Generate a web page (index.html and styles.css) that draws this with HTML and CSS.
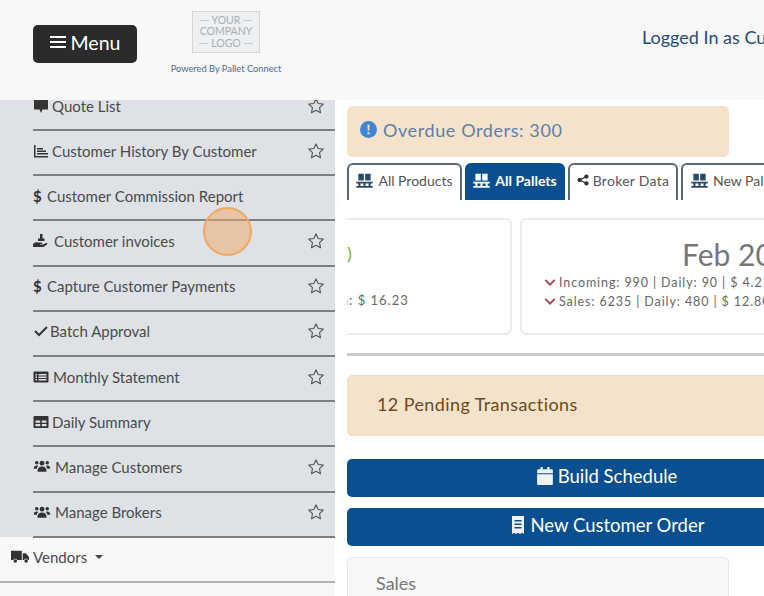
FILE: index.html
```html
<!DOCTYPE html>
<html lang="en">
<head>
  <meta charset="UTF-8" />
  <title>Dashboard</title>
  <link rel="stylesheet" href="styles.css">
</head>
<body>
  <svg class="defs" width="0" height="0">
    <symbol id="star" viewBox="0 0 24 24"><path d="M12 2.500l2.900 6.200 6.800.8-5 4.700 1.300 6.800-6-3.400-6 3.400 1.300-6.800-5-4.700 6.800-.8z" fill="none" stroke="currentColor" stroke-width="1.500" stroke-linejoin="round"/></symbol>
    <symbol id="users" viewBox="0 0 24 20"><circle cx="5" cy="5" r="2.400"/><circle cx="19" cy="5" r="2.400"/><circle cx="12" cy="5.500" r="3.200"/><path d="M1 13c0-3 1.500-4.500 4-4.500 1 0 1.600.3 2.100.7-1.300 1-2 2.300-2.100 3.800zM23 13c0-3-1.500-4.500-4-4.500-1 0-1.600.3-2.100.7 1.300 1 2 2.300 2.100 3.800zM6 16c0-4 2-6 6-6s6 2 6 6v1H6z"/></symbol>
    <symbol id="pallet" viewBox="0 0 24 22"><path d="M3 1h8v10H3zM13 1h8v10h-8zM0 13h24v2.500H0zM0 19h24v2.500H0zM3 15h3v4H3zM10.500 15h3v4h-3zM18 15h3v4h-3z"/></symbol>
    <symbol id="chevron" viewBox="0 0 14 10"><path d="M1.500 2l5.500 5.500L12.500 2" fill="none" stroke="currentColor" stroke-width="2.200"/></symbol>
  </svg>

  <header class="topbar">
    <button class="menu-btn">
      <svg class="menu-icon" viewBox="0 0 16 14"><path d="M0 1h16v2H0zM0 6h16v2H0zM0 11h16v2H0z"/></svg>
      Menu
    </button>
    <div class="brand">
      <div class="logo-box">
        <span class="logo-dash">YOUR</span>
        <span>COMPANY</span>
        <span class="logo-dash">LOGO</span>
      </div>
      <p class="powered">Powered By Pallet Connect</p>
    </div>
    <div class="logged-in">Logged In as Customer</div>
  </header>

  <div class="content">
    <aside class="sidebar">
      <ul class="submenu">
        <li class="item item-first">
          <span class="item-label"><svg class="ico" viewBox="0 0 16 16"><path d="M1 1.500h14v10H9.500L8 15l-1.500-3.500H1z"/></svg>Quote List</span>
          <svg class="star"><use href="#star"/></svg>
        </li>
        <li class="item">
          <span class="item-label"><svg class="ico" viewBox="0 0 16 16"><path d="M1 2h1.500v11H15v1.500H1zM4 5h6v1.500H4zM4 7.500h9V9H4zM4 10h11v1.500H4z"/></svg>Customer History By Customer</span>
          <svg class="star"><use href="#star"/></svg>
        </li>
        <li class="item">
          <span class="item-label"><span class="dollar">$</span>Customer Commission Report</span>
        </li>
        <li class="item">
          <span class="item-label"><svg class="ico ico-hand" viewBox="0 0 16 16"><path d="M7 1h2.500v5H7zM5 5.500h6.500V8H5zM0 11c2-2 3.500-2 5-1.500h3.500c1 0 1 1.500 0 1.500H7v.5h3l3-1.500c1.200-.5 2 .7 1 1.500l-3.500 2.500H0z"/></svg>Customer invoices</span>
          <svg class="star"><use href="#star"/></svg>
        </li>
        <li class="item">
          <span class="item-label"><span class="dollar">$</span>Capture Customer Payments</span>
          <svg class="star"><use href="#star"/></svg>
        </li>
        <li class="item">
          <span class="item-label"><svg class="ico ico-check" viewBox="0 0 14 12"><path d="M1 6l4 4 8-8" fill="none" stroke="currentColor" stroke-width="2"/></svg>Batch Approval</span>
          <svg class="star"><use href="#star"/></svg>
        </li>
        <li class="item">
          <span class="item-label"><svg class="ico ico-list" viewBox="0 0 16 16"><path fill-rule="evenodd" d="M1.500 2.500h13a1 1 0 0 1 1 1v9a1 1 0 0 1-1 1h-13a1 1 0 0 1-1-1v-9a1 1 0 0 1 1-1zM2.500 5v1.500H4V5zM5.500 5v1.500h8V5zM2.500 7.500V9H4V7.500zM5.500 7.500V9h8V7.500zM2.500 10v1.500H4V10zM5.500 10v1.500h8V10z"/></svg>Monthly Statement</span>
          <svg class="star"><use href="#star"/></svg>
        </li>
        <li class="item">
          <span class="item-label"><svg class="ico" viewBox="0 0 16 16"><path fill-rule="evenodd" d="M1.500 2h13a1 1 0 0 1 1 1v10a1 1 0 0 1-1 1h-13a1 1 0 0 1-1-1V3a1 1 0 0 1 1-1zM2.500 6.500v2.200h4.700V6.500zM8.800 6.500v2.200h4.700V6.500zM2.500 10v2.300h4.700V10zM8.800 10v2.300h4.700V10z"/></svg>Daily Summary</span>
        </li>
        <li class="item">
          <span class="item-label"><svg class="ico ico-wide"><use href="#users"/></svg>Manage Customers</span>
          <svg class="star"><use href="#star"/></svg>
        </li>
        <li class="item">
          <span class="item-label"><svg class="ico ico-wide"><use href="#users"/></svg>Manage Brokers</span>
          <svg class="star"><use href="#star"/></svg>
        </li>
      </ul>
      <div class="nav-row">
        <svg class="ico ico-truck" viewBox="0 0 20 16"><path d="M0 1.500h12v10.500H7a2.500 2.500 0 0 0-4.500 0H0zM13 4.500h3.500L20 8.500V12h-1a2.500 2.500 0 0 0-4.500 0H13z"/><circle cx="4.800" cy="13" r="2"/><circle cx="16.800" cy="13" r="2"/></svg>
        Vendors
        <span class="caret"></span>
      </div>
      <div class="nav-row"></div>
    </aside>

    <main class="main">
      <div class="alert alert-overdue">
        <svg class="info" viewBox="0 0 16 16"><circle cx="8" cy="8" r="8"/><path d="M7 3.500h2l-.3 5.500H7.300zM7 10.500h2v2H7z" fill="#f5e2cb"/></svg>
        Overdue Orders: 300
      </div>

      <div class="tabs">
        <div class="tab tab-products"><svg class="tab-ico"><use href="#pallet"/></svg>All Products</div>
        <div class="tab tab-active"><svg class="tab-ico"><use href="#pallet"/></svg>All Pallets</div>
        <div class="tab tab-broker">
          <svg class="tab-ico share" viewBox="0 0 14 14"><circle cx="11" cy="3" r="2.500"/><circle cx="3" cy="7" r="2.500"/><circle cx="11" cy="11" r="2.500"/><path d="M3 7l8-4M3 7l8 4" stroke="currentColor" stroke-width="1.500"/></svg>Broker Data
        </div>
        <div class="tab tab-new"><svg class="tab-ico"><use href="#pallet"/></svg>New Pallets</div>
      </div>

      <div class="cards">
        <div class="card card-prev">
          <div class="card-prev-title">)</div>
          <div class="card-prev-line">Margin: $ 16.23</div>
        </div>
        <div class="card card-feb">
          <div class="card-title">Feb 2021</div>
          <div class="card-line"><svg class="chev"><use href="#chevron"/></svg>Incoming: 990 | Daily: 90 | $ 4.21</div>
          <div class="card-line"><svg class="chev"><use href="#chevron"/></svg>Sales: 6235 | Daily: 480 | $ 12.80</div>
        </div>
      </div>

      <hr class="rule">

      <div class="alert alert-pending">12 Pending Transactions</div>

      <a class="action action-schedule">
        <svg class="action-ico" viewBox="0 0 14 16"><path d="M3 0h2v2h4V0h2v2h2a1 1 0 0 1 1 1v2.500H0V3a1 1 0 0 1 1-1h2zM0 6.500h14V15a1 1 0 0 1-1 1H1a1 1 0 0 1-1-1z"/></svg>
        Build Schedule
      </a>
      <a class="action">
        <svg class="action-ico" viewBox="0 0 14 18"><path fill-rule="evenodd" d="M1 0h12v18l-2-1.200L9 18l-2-1.200L5 18l-2-1.200L1 18zM3.500 4v1.500h7V4zM3.500 7.500V9h7V7.500zM3.500 11v1.500h7V11z"/></svg>
        New Customer Order
      </a>

      <div class="panel">Sales</div>
    </main>
  </div>

  <div class="click-mark"></div>
</body>
</html>
```

FILE: styles.css
```css
* { margin: 0; padding: 0; box-sizing: border-box; }

html, body {
  height: 100%;
  overflow: hidden;
}

body {
  font-family: "Lato", "Open Sans", sans-serif;
  background: #fff;
  color: #444;
}

.defs { position: absolute; }

.topbar {
  height: 100px;
  background: #f8f8f8;
  display: flex;
  align-items: flex-start;
  white-space: nowrap;
  overflow: hidden;
}

.menu-btn {
  margin: 25px 0 0 33px;
  width: 104px;
  height: 38px;
  flex: none;
  background: #2b2b2b;
  color: #fff;
  border: none;
  border-radius: 5px;
  font-family: inherit;
  font-size: 19.500px;
  display: flex;
  align-items: center;
  justify-content: center;
  gap: 5px;
  padding-bottom: 4px;
}

.menu-icon {
  width: 16px;
  height: 14px;
  fill: #fff;
}

.brand {
  margin: 11px 0 0 33px;
  width: 112px;
  flex: none;
  display: flex;
  flex-direction: column;
  align-items: center;
}

.logo-box {
  width: 68px;
  height: 42px;
  border: 1px solid #d4d6d8;
  background: #eef0f1;
  color: #a6afb8;
  font-size: 10.500px;
  line-height: 11.500px;
  text-align: center;
  display: flex;
  flex-direction: column;
  justify-content: center;
}

.logo-dash {
  display: flex;
  align-items: center;
  justify-content: center;
  gap: 3px;
}

.logo-dash::before,
.logo-dash::after {
  content: "";
  width: 9px;
  height: 1px;
  background: #c3c9ce;
}

.powered {
  margin-top: 10px;
  font-size: 9.300px;
  color: #4e6a8c;
}

.logged-in {
  margin: 26px 0 0 360px;
  flex: none;
  font-size: 18px;
  color: #1f4e79;
}

.content {
  display: flex;
  height: 496px;
}

.sidebar {
  width: 335px;
  flex: none;
  background: #f8f8f8;
  overflow: hidden;
}

.submenu {
  list-style: none;
  background: #dee2e6;
  padding-left: 33px;
  height: 437px;
}

.item {
  height: 45.200px;
  border-bottom: 2px solid #7d8083;
  display: flex;
  align-items: center;
  justify-content: space-between;
  padding: 0 10px 4px 0;
  font-size: 15px;
  color: #4a4a4a;
}

.item-first {
  height: 31px;
  padding-bottom: 18px;
}

.item-label {
  display: flex;
  align-items: center;
  white-space: nowrap;
}

.ico {
  width: 16px;
  height: 16px;
  margin-right: 3px;
  fill: #333;
  color: #333;
  flex: none;
}

.ico-check {
  height: 12px;
  margin-right: 1px;
}

.ico-hand { margin-right: 5px; }
.ico-list { margin-right: 4px; }

.ico-wide {
  width: 18px;
  height: 15px;
  margin-right: 4px;
}

.ico-truck {
  width: 18px;
  height: 15px;
  margin-right: 4px;
}

.dollar {
  width: 14px;
  color: #333;
  font-weight: bold;
}

.star {
  width: 18px;
  height: 18px;
  color: #555;
  flex: none;
}

.nav-row {
  height: 46px;
  border-bottom: 2px solid #b3b3b3;
  padding: 0 0 5px 11px;
  display: flex;
  align-items: center;
  font-size: 15px;
  color: #4a4a4a;
}

.caret {
  margin-left: 8px;
  border-top: 4px solid #444;
  border-left: 4px solid transparent;
  border-right: 4px solid transparent;
}

.main {
  flex: 1;
  min-width: 0;
  padding: 6px 0 0 12px;
  overflow: hidden;
}

.alert {
  background: #f5e2cb;
  border-radius: 5px;
  display: flex;
  align-items: center;
}

.alert-overdue {
  width: 382px;
  height: 51px;
  padding: 0 0 4px 13px;
  font-size: 18px;
  letter-spacing: .6px;
  color: #5f7fa6;
}

.info {
  width: 17px;
  height: 17px;
  margin-right: 6px;
  fill: #3f87d6;
}

.tabs {
  display: flex;
  gap: 3px;
  margin-top: 6px;
  width: 500px;
}

.tab {
  height: 37px;
  border: 2px solid #5c6a70;
  border-bottom: none;
  border-radius: 6px 6px 0 0;
  display: flex;
  align-items: center;
  justify-content: center;
  padding-bottom: 5px;
  font-size: 14px;
  color: #555;
  background: #fff;
  white-space: nowrap;
  flex: none;
}

.tab-products { width: 115px; }
.tab-active { width: 100px; background: #0a5090; color: #fff; border-color: #0a5090; font-weight: bold; }
.tab-broker { width: 110px; letter-spacing: .3px; }
.tab-new { width: 130px; justify-content: flex-start; padding-left: 8px; }

.tab-ico {
  width: 17px;
  height: 15px;
  margin-right: 5px;
  fill: currentColor;
  color: #2c4a68;
}

.tab-active .tab-ico { color: #fff; }

.share {
  width: 12px;
  height: 12px;
  margin-right: 4px;
  color: #333;
}

.cards {
  display: flex;
  gap: 8px;
  margin-top: 18px;
  width: 600px;
}

.card {
  height: 117px;
  background: #fff;
  border: 2px solid #ececec;
  border-radius: 6px;
  flex: none;
}

.card-prev {
  width: 165px;
  border-left: none;
  border-radius: 0 6px 6px 0;
  overflow: hidden;
  color: #666;
}

.card-prev-title {
  margin-top: 22px;
  font-size: 18px;
  color: #6fb04a;
}

.card-prev-line {
  margin-top: 28px;
  font-size: 13px;
  letter-spacing: 1px;
  white-space: nowrap;
  text-indent: -44px;
}

.card-feb {
  width: 440px;
  padding-left: 22px;
  color: #666;
}

.card-title {
  margin-top: 15px;
  font-size: 30px;
  line-height: 38px;
  color: #777;
  padding-left: 138px;
  white-space: nowrap;
}

.card-line {
  display: flex;
  align-items: center;
  font-size: 12.500px;
  line-height: 19px;
  letter-spacing: .9px;
  white-space: nowrap;
}

.chev {
  width: 12px;
  height: 9px;
  margin-right: 3px;
  color: #a8405a;
}

.rule {
  width: 500px;
  border: none;
  height: 3px;
  background: #ccc;
  margin-top: 18px;
}

.alert-pending {
  width: 520px;
  height: 61px;
  margin-top: 19px;
  padding: 0 0 4px 29px;
  font-size: 18px;
  letter-spacing: .4px;
  color: #6b4a22;
  border: 1px solid #f0ddc5;
}

.action {
  width: 520px;
  height: 38px;
  margin-top: 11px;
  padding-bottom: 4px;
  background: #0a5090;
  color: #fff;
  border-radius: 5px;
  display: flex;
  align-items: center;
  justify-content: center;
  gap: 5px;
  font-size: 18.500px;
}

.action-schedule { margin-top: 23px; }

.action-ico {
  width: 16px;
  height: 18px;
  fill: #f1f1f1;
}

.panel {
  width: 382px;
  height: 80px;
  margin-top: 11px;
  padding: 14px 28px;
  background: #f8f8f8;
  border: 1px solid #e5e5e5;
  border-radius: 5px;
  font-size: 18px;
  color: #777;
}

.click-mark {
  position: absolute;
  left: 203px;
  top: 207px;
  width: 49px;
  height: 49px;
  border-radius: 50%;
  background: rgba(240, 165, 100, .5);
  border: 2px solid #f0a860;
}
```
